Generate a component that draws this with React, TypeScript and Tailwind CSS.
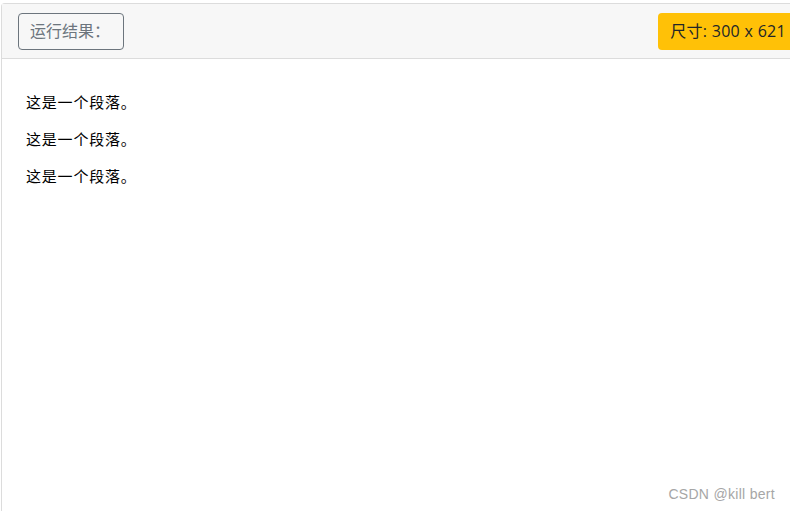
export default function App() {
  const paragraphs = ["这是一个段落。", "这是一个段落。", "这是一个段落。"];

  return (
    <div
      className="relative h-[511px] w-[790px] overflow-hidden bg-white pt-[3px] pl-[1px]"
      style={{ fontFamily: '"Open Sans", "Noto Sans CJK SC", sans-serif' }}
    >
      <div className="flex h-[508px] flex-col rounded-tl-[4px] border-t border-l border-[#dcdcdc]">
        {/* header bar */}
        <div className="flex h-[55px] shrink-0 items-center justify-between border-b border-[#dcdcdc] bg-[#f7f7f7] pl-[16px]">
          <button className="flex h-[37px] w-[106px] items-center rounded-[4px] border border-[#6c757d] px-[11px] text-[16px] text-[#6c757d]">
            运行结果：
          </button>
          <div className="-mr-[14px] flex h-[37px] items-center rounded-[4px] bg-[#ffc107] pl-[12px] pr-[18px] text-[16px] tracking-[0.3px] text-[#212529]">
            尺寸: 300 x 621
          </div>
        </div>

        {/* result body */}
        <div
          className="flex flex-col gap-[15px] px-[24px] pt-[32px] text-[15px] leading-[22px] tracking-[0.8px] text-black"
          style={{ fontFamily: '"Noto Sans CJK SC", sans-serif' }}
        >
          {paragraphs.map((p, i) => (
            <p key={i}>{p}</p>
          ))}
        </div>
      </div>

      <div
        className="absolute bottom-[6px] right-[15px] text-[14px] tracking-[0.3px] text-[#a6a6a6]"
        style={{ fontFamily: '"Liberation Sans", Arial, sans-serif' }}
      >
        CSDN @kill bert
      </div>
    </div>
  );
}
